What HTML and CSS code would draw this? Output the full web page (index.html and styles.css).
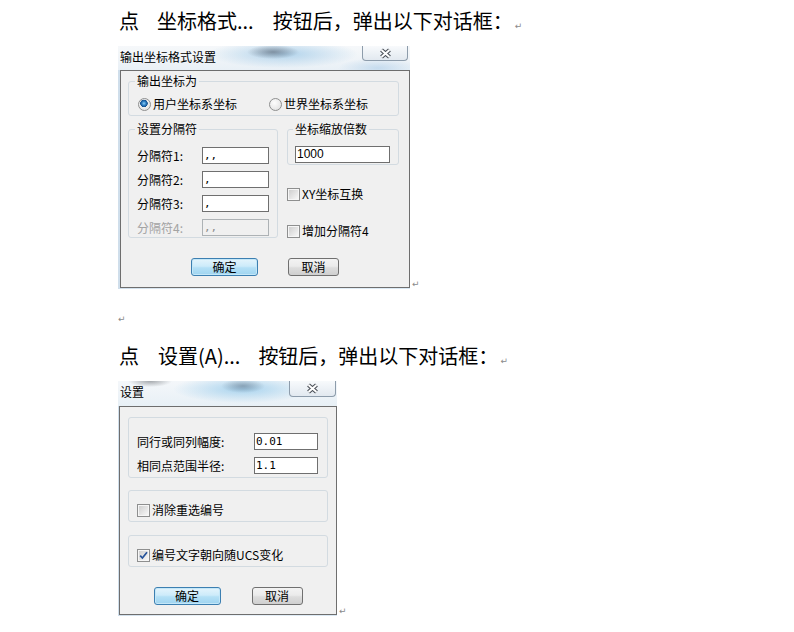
FILE: index.html
```html
<!DOCTYPE html>
<html lang="zh-CN">
<head>
    <meta charset="UTF-8">
    <meta name="viewport" content="width=device-width, initial-scale=1.0">
    <title>坐标格式与设置对话框</title>
    <link rel="stylesheet" href="styles.css">
</head>
<body>
<div class="page">
    <p class="line">点<span class="gap-a"></span>坐标格式...<span class="gap-b"></span>按钮后，弹出以下对话框：<span class="pmark">↵</span></p>

    <div class="shot">
        <div class="dlg dlg-coord">
            <div class="titlebar">
                <span class="title">输出坐标格式设置</span>
                <span class="close">
                    <svg width="15" height="11" viewBox="0 0 15 11"><path d="M3.5 2 L11.5 9 M11.5 2 L3.5 9" stroke="#4b5058" stroke-width="4.2" fill="none"/><path d="M3.5 2 L11.5 9 M11.5 2 L3.5 9" stroke="#fff" stroke-width="2" fill="none"/></svg>
                </span>
            </div>
            <div class="client">
                <fieldset class="grp grp-out">
                    <legend>输出坐标为</legend>
                    <div class="radios">
                        <span class="opt"><span class="radio on"></span>用户坐标系坐标</span>
                        <span class="opt"><span class="radio"></span>世界坐标系坐标</span>
                    </div>
                </fieldset>
                <div class="cols">
                    <fieldset class="grp grp-sep">
                        <legend>设置分隔符</legend>
                        <div class="fields">
                            <span class="lbl">分隔符1:</span><span class="edit">,,</span>
                            <span class="lbl">分隔符2:</span><span class="edit">,</span>
                            <span class="lbl">分隔符3:</span><span class="edit">,</span>
                            <span class="lbl off">分隔符4:</span><span class="edit off">,,</span>
                        </div>
                    </fieldset>
                    <div class="side">
                        <fieldset class="grp grp-scale">
                            <legend>坐标缩放倍数</legend>
                            <span class="edit wide">1000</span>
                        </fieldset>
                        <div class="opt chk-row"><span class="chk"></span>XY坐标互换</div>
                        <div class="opt chk-row"><span class="chk"></span>增加分隔符4</div>
                    </div>
                </div>
                <div class="btns">
                    <span class="btn ok">确定</span>
                    <span class="btn cancel">取消</span>
                </div>
            </div>
        </div>
        <span class="pmark">↵</span>
    </div>

    <p class="line blank"><span class="pmark">↵</span></p>

    <p class="line second">点<span class="gap-c"></span>设置(A)...<span class="gap-d"></span>按钮后，弹出以下对话框：<span class="pmark">↵</span></p>

    <div class="shot">
        <div class="dlg dlg-set">
            <div class="titlebar">
                <span class="title">设置</span>
                <span class="close">
                    <svg width="15" height="11" viewBox="0 0 15 11"><path d="M3.5 2 L11.5 9 M11.5 2 L3.5 9" stroke="#4b5058" stroke-width="4.2" fill="none"/><path d="M3.5 2 L11.5 9 M11.5 2 L3.5 9" stroke="#fff" stroke-width="2" fill="none"/></svg>
                </span>
            </div>
            <div class="client">
                <fieldset class="grp grp-dist">
                    <div class="fields">
                        <span class="lbl">同行或同列幅度:</span><span class="edit">0.01</span>
                        <span class="lbl">相同点范围半径:</span><span class="edit">1.1</span>
                    </div>
                </fieldset>
                <fieldset class="grp grp-chk">
                    <div class="opt"><span class="chk"></span>消除重选编号</div>
                </fieldset>
                <fieldset class="grp grp-chk">
                    <div class="opt"><span class="chk checked"><svg width="9" height="9" viewBox="0 0 9 9"><path d="M1.2 4.6 L3.4 7 L8 1.2" stroke="#25529a" stroke-width="1.7" fill="none"/></svg></span>编号文字朝向随UCS变化</div>
                </fieldset>
                <div class="btns">
                    <span class="btn ok">确定</span>
                    <span class="btn cancel">取消</span>
                </div>
            </div>
        </div>
        <span class="pmark">↵</span>
    </div>
</div>
</body>
</html>
```

FILE: styles.css
```css
body {
    margin: 0;
    background: #fff;
    color: #000;
    font-family: "Noto Sans CJK SC", "Noto Sans", sans-serif;
}
.page {
    padding: 7px 0 0 118px;
}
.line {
    margin: 0;
    padding-left: 1px;
    font-size: 20px;
    line-height: 28px;
    white-space: nowrap;
}
.gap-a { display: inline-block; width: 18px; }
.gap-b { display: inline-block; width: 19px; }
.gap-c { display: inline-block; width: 19px; }
.gap-d { display: inline-block; width: 18px; }
.pmark {
    font-family: "DejaVu Sans", sans-serif;
    font-size: 9px;
    line-height: 10px;
    color: #8a8a8a;
    margin-left: 2px;
}
.line.blank {
    margin-top: 11px;
    padding-left: 0;
}
.line.blank .pmark { margin-left: 0; }
.line.second { margin: 14px 0 1px; }

.shot {
    display: flex;
    align-items: flex-end;
    margin-top: 11px;
}
.shot > .pmark { margin: 0 0 0 2px; }

/* dialog frame */
.dlg {
    box-sizing: border-box;
    padding-bottom: 1px;
    background: linear-gradient(90deg, #cfdeeb, #eef5fb 45%, #d8e7f3);
    font-size: 12px;
    line-height: 16px;
}
.dlg-coord { width: 292px; }
.dlg-set { width: 219px; }

.titlebar {
    display: flex;
    justify-content: space-between;
    align-items: flex-start;
    height: 24px;
}
.dlg-coord .titlebar {
    background:
        radial-gradient(ellipse 26px 7px at 155px 6px, rgba(100, 114, 130, .7), transparent),
        radial-gradient(ellipse 75px 14px at 165px 8px, rgba(160, 202, 232, .8), transparent),
        radial-gradient(ellipse 40px 10px at 260px 22px, rgba(185, 212, 235, .75), transparent),
        linear-gradient(#f6f8fa, #e9f0f6);
}
.dlg-set .titlebar {
    height: 25px;
    background:
        radial-gradient(ellipse 22px 6px at 32px 0, rgba(110, 115, 120, .6), transparent),
        radial-gradient(ellipse 22px 7px at 125px 5px, rgba(105, 125, 145, .6), transparent),
        radial-gradient(ellipse 70px 14px at 125px 8px, rgba(155, 205, 236, .85), transparent),
        linear-gradient(#f4f7fa, #e8f0f6);
}
.title {
    margin: 3px 0 0 2px;
}
.close {
    display: flex;
    align-items: center;
    justify-content: center;
    width: 44px;
    height: 14px;
    margin-right: 2px;
    border: 1px solid #8d9cab;
    border-top: 0;
    border-radius: 0 0 4px 4px;
    background: linear-gradient(#f8fafc, #e2e9f0);
}
.dlg-set .close {
    width: 45px;
    height: 15px;
    margin-right: 1px;
}

.client {
    box-sizing: border-box;
    margin-left: 2px;
    border: 1px solid #6e6e6e;
    background: #f0f0f0;
}
.dlg-coord .client {
    width: 290px;
    padding: 2px 0 11px 7px;
}
.dlg-set .client {
    width: 218px;
    margin-left: 1px;
    padding: 10px 0 9px 8px;
}

/* group boxes */
.grp {
    box-sizing: border-box;
    margin: 0;
    min-width: 0;
    border: 1px solid #d3dbe1;
    border-radius: 3px;
    padding: 0 0 0 8px;
}
.grp legend {
    padding: 0 2px;
    margin-left: -2px;
    line-height: 16px;
}
.grp-out {
    width: 271px;
    padding: 7px 0 3px 8px;
}
.radios {
    display: flex;
    align-items: center;
    height: 16px;
}
.opt {
    display: flex;
    align-items: center;
    gap: 2px;
    height: 16px;
}
.radios .opt + .opt { margin-left: 31px; }
.radio {
    box-sizing: border-box;
    width: 13px;
    height: 13px;
    margin-left: 1px;
    border: 1px solid #8e8f8f;
    border-radius: 50%;
    background: radial-gradient(circle at 40% 35%, #fdfdfd, #dcdcdc);
}
.radio.on {
    background:
        radial-gradient(circle at 45% 40%, #8ed0f6 0, #2f7fc4 2px, #114e8c 3.5px, transparent 4px),
        radial-gradient(circle at 40% 35%, #fdfdfd, #dcdcdc);
}

.cols {
    display: flex;
    align-items: flex-start;
    gap: 9px;
    margin-top: 5px;
}
.grp-sep {
    width: 150px;
    padding: 10px 0 1px 8px;
}
.fields {
    display: grid;
    grid-template-columns: 65px 67px;
    row-gap: 7px;
    align-items: center;
}
.lbl.off { color: #a3a3a3; }
.edit {
    box-sizing: border-box;
    display: block;
    height: 17px;
    padding-left: 1px;
    border: 1px solid #6f6f6f;
    background: #fff;
    font-family: "DejaVu Sans Mono", monospace;
    font-size: 11px;
    line-height: 15px;
}
.edit.off {
    border-color: #adb2b5;
    background: #f0f0f0;
    color: #8d8d8d;
}
.side { width: 112px; }
.grp-scale {
    width: 112px;
    padding: 9px 0 1px 7px;
}
.edit.wide {
    width: 95px;
    font-family: "Liberation Sans", sans-serif;
    font-size: 12px;
}
.chk-row { margin-top: 21px; }
.chk {
    box-sizing: border-box;
    display: flex;
    align-items: center;
    justify-content: center;
    width: 13px;
    height: 13px;
    padding: 1px;
    border: 1px solid #8e8f8f;
    background: linear-gradient(135deg, #cfcfcf, #f7f7f7) content-box, #f6f6f6;
}

.btns {
    display: flex;
    justify-content: center;
    gap: 30px;
    margin-top: 19px;
    padding-right: 7px;
}
.btn {
    box-sizing: border-box;
    height: 18px;
    border: 1px solid #707070;
    border-radius: 3px;
    text-align: center;
    line-height: 16px;
    background: linear-gradient(#f3f3f3, #ebebeb 45%, #dddddd 55%, #cfcfcf);
}
.btn.ok {
    width: 67px;
    border-color: #3c7fb1;
    background: linear-gradient(#e4f4fc, #cdebfa 45%, #b4e0f6 55%, #9fd4f0);
    box-shadow: inset 0 0 0 1px #c4e7f8;
}
.btn.cancel { width: 51px; }

/* second dialog */
.grp-dist {
    width: 200px;
    padding: 15px 0 3px 8px;
}
.grp-dist .fields { grid-template-columns: 117px 64px; }
.grp-chk {
    width: 200px;
    height: 32px;
    margin-top: 12px;
    padding: 11px 0 0 8px;
}
.grp-chk + .grp-chk { margin-top: 13px; }
.dlg-set .btns {
    gap: 31px;
    margin-top: 20px;
    padding-right: 8px;
}
```
